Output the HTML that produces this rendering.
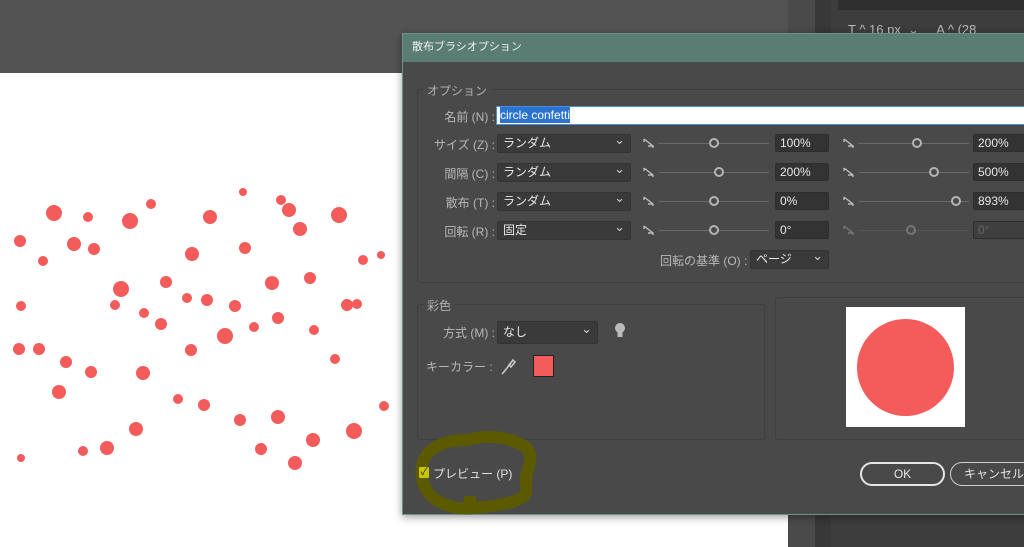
<!DOCTYPE html>
<html><head><meta charset="utf-8"><style>
*{margin:0;padding:0;box-sizing:border-box}
body{width:1024px;height:547px;overflow:hidden;position:relative;background:#fff;font-family:"Liberation Sans","Noto Sans CJK JP",sans-serif;font-size:12px;color:#d0d0d0}
.a{position:absolute}
.lbl{position:absolute;text-align:right;width:90px;left:405px;color:#b8b8b8}
.sel{position:absolute;background:#3a3a3a;border:1px solid #333;border-radius:2px;color:#e8e8e8;padding-left:5px;line-height:17px;height:19px}
.sel:after{content:"⌄";position:absolute;right:5px;top:-4px;font-size:13px;color:#ccc}
.val{position:absolute;background:#333;border:1px solid #2e2e2e;border-radius:2px;color:#e8e8e8;padding-left:4px;line-height:16px;height:18px;width:54px}
.trk{position:absolute;height:1px;background:#6a6a6a}
.knob{position:absolute;width:10px;height:10px;border:2px solid #b5b5b5;border-radius:50%;background:#494949}
.dot{position:absolute;background:#f45b5b;border-radius:50%}
</style></head><body>
<div class="a" style="left:0;top:0;width:790px;height:73px;background:#535353"></div>
<div class="a" style="left:788px;top:0;width:28px;height:547px;background:#4a4a4a"></div>
<div class="a" style="left:815px;top:0;width:16px;height:547px;background:#383838"></div>
<div class="a" style="left:831px;top:0;width:193px;height:547px;background:#3d3d3d"></div>
<div class="a" style="left:838px;top:0;width:186px;height:10px;background:#2f2f2f"></div>
<div class="a" style="left:848px;top:22px;color:#bbb;font-size:13px">T ^ 16 px &nbsp;⌄ &nbsp;&nbsp;&nbsp; A ^ (28</div>
<div id="dots"></div>

<div class="a" style="left:402px;top:33px;width:630px;height:482px;background:#494949;border:1px solid #6f9186;box-shadow:0 2px 8px rgba(0,0,0,.4)"></div>
<div class="a" style="left:403px;top:34px;width:621px;height:28px;background:#5a7d73;color:#f0f0f0;font-size:11px;line-height:26px;padding-left:9px">散布ブラシオプション</div>

<div class="a" style="left:417px;top:89px;width:620px;height:194px;border:1px solid #3e3e3e;border-radius:3px"></div>
<div class="a" style="left:424px;top:82px;background:#494949;padding:0 3px;color:#b0b0b0">オプション</div>
<div class="lbl" style="top:108px">名前 (N) :</div>
<div class="a" style="left:496px;top:106px;width:540px;height:19px;background:#fff;border:1px solid #4a8fd9"><span style="background:#2b73d0;color:#fff;margin-left:3px;line-height:16px;display:inline-block;font-size:12px">circle confetti</span></div>

<div class="lbl" style="top:136px">サイズ (Z) :</div>
<div class="lbl" style="top:165px">間隔 (C) :</div>
<div class="lbl" style="top:194px">散布 (T) :</div>
<div class="lbl" style="top:223px">回転 (R) :</div>
<div class="sel" style="left:497px;top:134px;width:134px">ランダム</div>
<div class="sel" style="left:497px;top:163px;width:134px">ランダム</div>
<div class="sel" style="left:497px;top:192px;width:134px">ランダム</div>
<div class="sel" style="left:497px;top:221px;width:134px">固定</div>
<div id="sl"></div>
<div class="a" style="left:660px;top:252px;color:#b8b8b8">回転の基準 (O) :</div>
<div class="sel" style="left:750px;top:250px;width:79px">ページ</div>

<div class="a" style="left:417px;top:304px;width:348px;height:136px;border:1px solid #3e3e3e;border-radius:3px"></div>
<div class="a" style="left:424px;top:297px;background:#494949;padding:0 3px;color:#b0b0b0">彩色</div>
<div class="a" style="left:775px;top:297px;width:260px;height:143px;border:1px solid #3e3e3e;border-radius:3px"></div>
<div class="a" style="left:846px;top:307px;width:119px;height:120px;background:#fff"></div>
<div class="a" style="left:857px;top:319px;width:97px;height:97px;border-radius:50%;background:#f45b5b"></div>
<div class="lbl" style="top:324px">方式 (M) :</div>
<div class="sel" style="left:497px;top:321px;width:101px;height:23px;line-height:21px">なし</div>
<svg class="a" style="left:614px;top:322px" width="12" height="18"><circle cx="6" cy="6" r="5" fill="#bbb"/><rect x="3.5" y="10" width="5" height="5" fill="#bbb"/></svg>
<div class="a" style="left:426px;top:358px;color:#b8b8b8">キーカラー :</div>
<svg class="a" style="left:500px;top:357px" width="16" height="18"><path d="M3 16 L11 6 M13 3 L9 8 L11 10 L15 5 Z M3 16 L2 17" stroke="#ccc" stroke-width="1.5" fill="none"/></svg>
<div class="a" style="left:533px;top:355px;width:21px;height:22px;background:#f45b5b;border:1px solid #222"></div>

<svg class="a" style="left:412px;top:428px" width="130" height="92"><path d="M55 12 C22 12 6 28 10 50 C14 74 40 82 62 80 C90 77 112 74 114 64 L114 48 C118 36 122 24 112 18 C92 6 70 8 55 12 Z M58 78 L58 68" stroke="#5c5a00" stroke-width="12" fill="none"/></svg>
<div class="a" style="left:419px;top:467px;width:10px;height:11px;background:#c8c400;border-radius:1px;color:#222;font-size:10px;line-height:11px;text-align:center">✓</div>
<div class="a" style="left:433px;top:465px;color:#e0e0e0">プレビュー (P)</div>

<div class="a" style="left:860px;top:462px;width:85px;height:24px;border:2px solid #e5e5e5;border-radius:12px;text-align:center;line-height:20px;color:#e5e5e5">OK</div>
<div class="a" style="left:950px;top:462px;width:90px;height:24px;border:1px solid #cfcfcf;border-radius:12px;padding-left:13px;line-height:22px;color:#e5e5e5">キャンセル</div>

<script>
var d=[[54,213,8],[88,217,5],[130,221,8],[151,204,5],[243,192,4],[281,200,5],[289,210,7],[210,217,7],[339,215,8],[20,241,6],[74,244,7],[94,249,6],[43,261,5],[192,254,7],[245,248,6],[300,229,7],[363,260,5],[381,255,4],[121,289,8],[166,282,6],[272,283,7],[310,278,6],[21,306,5],[115,305,5],[187,298,5],[207,300,6],[235,306,6],[347,305,6],[357,304,5],[144,313,5],[161,324,6],[254,327,5],[278,318,6],[225,336,8],[314,330,5],[19,349,6],[39,349,6],[191,350,6],[66,362,6],[91,372,6],[143,373,7],[335,359,5],[59,392,7],[178,399,5],[204,405,6],[384,406,5],[240,420,6],[278,417,7],[136,429,7],[354,431,8],[313,440,7],[107,448,7],[83,451,5],[261,449,6],[21,458,4],[295,463,7]];
var h='';d.forEach(function(p){h+='<div class="dot" style="left:'+(p[0]-p[2])+'px;top:'+(p[1]-p[2])+'px;width:'+(2*p[2])+'px;height:'+(2*p[2])+'px"></div>'});
document.getElementById('dots').innerHTML=h;
var rows=[[143,714,'100%',917,'200%',0],[172,719,'200%',934,'500%',0],[201,714,'0%',956,'893%',0],[230,714,'0°',911,'0°',1]];
var s='';rows.forEach(function(r){
 var y=r[0];
 [[643,r[1],775,r[2],0],[843,r[3],973,r[4],r[5]]].forEach(function(g){
  var op=g[4]?0.4:1;
  s+='<svg class="a" style="left:'+g[0]+'px;top:'+(y-6)+'px;opacity:'+op+'" width="12" height="12"><path d="M1 2 L10 9 L10 11 M1 2 L1 5 M10 9 L5 9" stroke="#bbb" stroke-width="1.4" fill="none"/></svg>';
  s+='<div class="trk" style="left:'+(g[0]+15)+'px;top:'+y+'px;width:111px;opacity:'+op+'"></div>';
  s+='<div class="knob" style="left:'+(g[1]-5)+'px;top:'+(y-5)+'px;opacity:'+op+'"></div>';
  s+='<div class="val" style="left:'+g[2]+'px;top:'+(y-9)+'px;'+(g[4]?'color:#666;background:#3f3f3f':'')+'">'+g[3]+'</div>';
 });
});
document.getElementById('sl').innerHTML=s;
</script>
</body></html>
